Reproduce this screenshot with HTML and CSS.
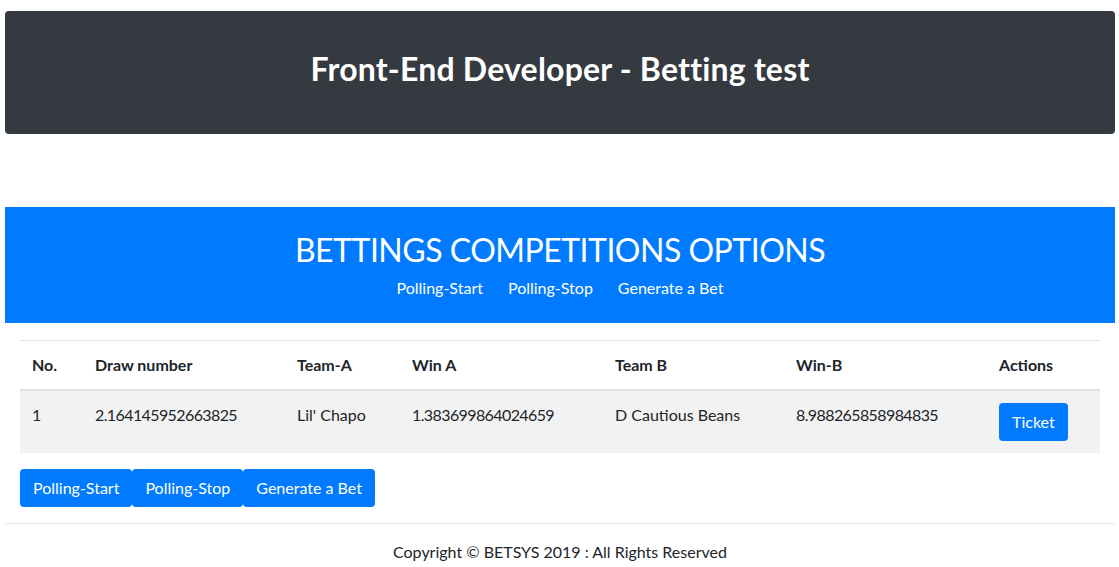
FILE: index.html
```html
<!DOCTYPE html>
<html lang="en">
<head>
<meta charset="utf-8">
<title>Betting test</title>
<link rel="stylesheet" href="styles.css">
</head>
<body>
<div class="page">
  <header class="top">
    <h1 class="top-title">Front-End Developer - Betting test</h1>
  </header>

  <section class="options">
    <h2 class="options-title">BETTINGS COMPETITIONS OPTIONS</h2>
    <nav class="options-nav">
      <a class="options-link" href="#">Polling-Start</a>
      <a class="options-link" href="#">Polling-Stop</a>
      <a class="options-link" href="#">Generate a Bet</a>
    </nav>
  </section>

  <div class="content">
    <table class="bets">
      <thead>
        <tr>
          <th class="c-no">No.</th>
          <th class="c-draw">Draw number</th>
          <th class="c-ta">Team-A</th>
          <th class="c-wa">Win A</th>
          <th class="c-tb">Team B</th>
          <th class="c-wb">Win-B</th>
          <th class="c-act">Actions</th>
        </tr>
      </thead>
      <tbody>
        <tr>
          <td>1</td>
          <td class="num">2.164145952663825</td>
          <td>Lil' Chapo</td>
          <td class="num">1.383699864024659</td>
          <td>D Cautious Beans</td>
          <td class="num">8.988265858984835</td>
          <td><button class="btn" type="button">Ticket</button></td>
        </tr>
      </tbody>
    </table>

    <div class="controls"><button class="btn" type="button">Polling-Start</button><button class="btn" type="button">Polling-Stop</button><button class="btn" type="button">Generate a Bet</button></div>
  </div>

  <hr class="divider">
  <footer class="footer">Copyright © BETSYS 2019 : All Rights Reserved</footer>
</div>
</body>
</html>
```

FILE: styles.css
```css
* {
  box-sizing: border-box;
}

html, body {
  margin: 0;
  padding: 0;
  background: #fff;
}

body {
  font-family: Lato, "Noto Sans", "Liberation Sans", sans-serif;
  font-size: 16px;
  line-height: 24px;
  color: #212529;
}

.page {
  padding: 11px 4px 0 5px;
}

.top {
  height: 123px;
  background: #343a40;
  border-radius: 4px;
  display: flex;
  align-items: center;
  justify-content: center;
}

.top-title {
  margin: 0 0 8px 0;
  color: #fff;
  font-size: 32px;
  line-height: 38px;
  font-weight: 700;
  letter-spacing: 0.2px;
}

.options {
  margin-top: 73px;
  height: 116px;
  background: #007bff;
  padding-top: 24px;
  display: flex;
  flex-direction: column;
  align-items: center;
}

.options-title {
  margin: 0;
  color: #fff;
  font-size: 32px;
  line-height: 38px;
  font-weight: 400;
  letter-spacing: -0.5px;
}

.options-nav {
  margin-top: 7px;
  display: flex;
  gap: 25px;
}

.options-link {
  color: #fff;
  text-decoration: none;
  font-size: 16px;
  line-height: 24px;
}

.content {
  padding: 17px 15px 0 15px;
}

.bets {
  width: 100%;
  border-collapse: collapse;
  table-layout: fixed;
  margin-bottom: 16px;
}

.bets th,
.bets td {
  padding: 12px;
  text-align: left;
  vertical-align: top;
}

.bets th {
  font-weight: 700;
  border-top: 1px solid #dee2e6;
  border-bottom: 2px solid #dee2e6;
}

.bets tbody tr {
  background: #f2f2f2;
}

.bets .num {
  letter-spacing: -0.6px;
}

.c-no { width: 63px; }
.c-draw { width: 202px; }
.c-ta { width: 115px; }
.c-wa { width: 203px; }
.c-tb { width: 181px; }
.c-wb { width: 203px; }
.c-act { width: 113px; }

.btn {
  display: inline-block;
  font-family: inherit;
  font-size: 16px;
  line-height: 24px;
  padding: 7px 13px;
  color: #fff;
  background: #007bff;
  border: 0;
  border-radius: 4px;
  cursor: pointer;
}

.controls {
  display: flex;
}

.divider {
  margin: 16px 0 0 0;
  border: 0;
  border-top: 1px solid #e5e5e5;
}

.footer {
  margin-top: 16px;
  text-align: center;
  line-height: 24px;
}
```
